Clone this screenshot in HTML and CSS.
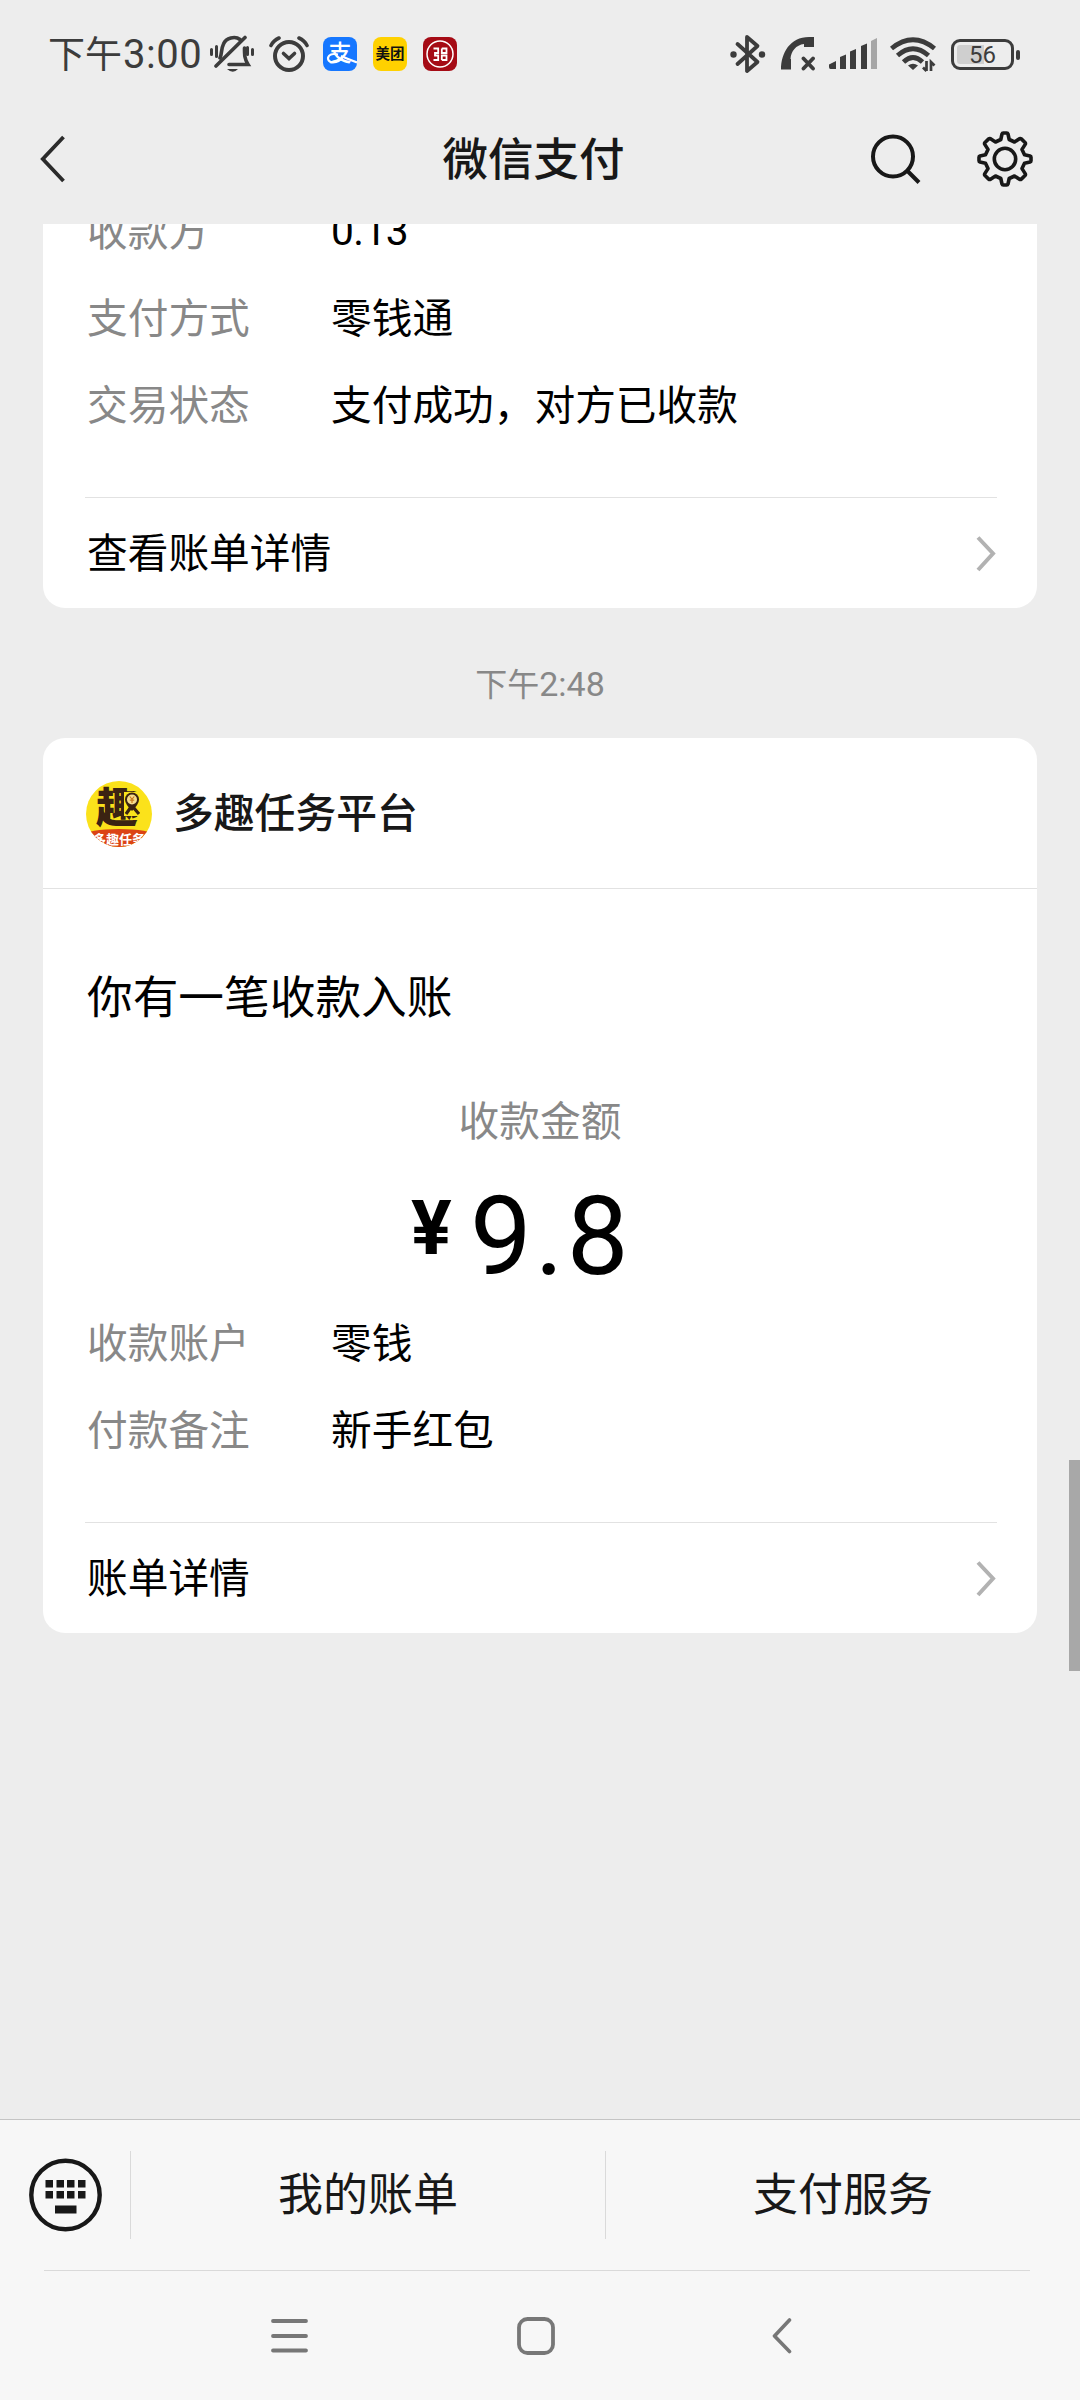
FILE: index.html
```html
<!DOCTYPE html>
<html lang="zh-CN">
<head>
<meta charset="utf-8">
<title>微信支付</title>
<link rel="stylesheet" href="styles.css">
</head>
<body>
<div class="screen">
  <div class="status">
    <div class="clock">下午<span class="digits">3:00</span></div>
    <svg class="bell" width="44" height="38" viewBox="0 0 44 38" fill="none" stroke="#3c3c3c" stroke-width="3.6" stroke-linecap="round">
      <path d="M10 23C12 19 11 14 13.500 9C16 3 25 0.500 30 4.500"/>
      <path d="M34.500 13C34.500 20 34.500 24 38 29.500H19"/>
      <path d="M6 31L35 2.500"/>
      <path d="M1.500 14.500v5M6.500 11.500v10M37.500 12.500v7M42.500 14.500v5" stroke-width="3"/>
      <path d="M17 34h11q-5 5.500-11 0z" fill="#3c3c3c" stroke="none"/>
    </svg>
    <svg class="alarm" width="40" height="36" viewBox="0 0 40 36" fill="none" stroke="#3c3c3c" stroke-linecap="round">
      <circle cx="20" cy="20" r="14" stroke-width="4"/>
      <path d="M14.500 17.500L20 22.500L25.500 17.500" stroke-width="3.600"/>
      <path d="M2 9.500Q4.500 4.500 10 2M38 9.500Q35.500 4.500 30 2" stroke-width="3.600"/>
    </svg>
    <div class="app alipay">支<svg width="34" height="34" viewBox="0 0 34 34" fill="none" stroke="#fff" stroke-width="2.200"><path d="M15 17.500C3 14.500 2.500 25.500 10 25.500C14 25.500 18 23 20.500 19M18 19Q26 22.500 34 25.500"/></svg></div>
    <div class="app meituan">美团</div>
    <div class="app icbc">
      <svg width="34" height="34" viewBox="0 0 34 34" fill="none" stroke="#fff">
        <circle cx="17" cy="17" r="13" stroke-width="1.500"/>
        <path d="M10.500 11.500H15.200V16H12V18.500H15.200V23H10.500M18.800 11.500H23.500V16H20.300M20.300 18.500H23.500V23H18.800M18.800 11.500V16H22M18.800 23V18.500H22" stroke-width="1.800"/>
      </svg>
    </div>
    <svg class="bt" width="36" height="40" viewBox="0 0 36 40" fill="none" stroke="#3c3c3c" stroke-width="3.800" stroke-linejoin="round" stroke-linecap="round">
      <path d="M7.500 10L27.500 28L17 37V3L27.500 12L7.500 30"/>
      <circle cx="3.500" cy="20.500" r="3.200" fill="#3c3c3c" stroke="none"/><circle cx="32" cy="20.500" r="3.200" fill="#3c3c3c" stroke="none"/>
    </svg>
    <svg class="call" width="35" height="34" viewBox="0 0 35 34">
      <path d="M0 32.500C0 16 9 0 28 0H33V10H23V7C15 8 10 14 9.500 22H10V32.500Z" fill="#3c3c3c"/>
      <path d="M22.500 21.500L32 31.500M32 21.500L22.500 31.500" stroke="#3c3c3c" stroke-width="3.800" stroke-linecap="round"/>
    </svg>
    <svg class="signal" width="48" height="32" viewBox="0 0 48 32" fill="#3c3c3c">
      <path d="M0 26.500L7 23V31H1.500Q0 31 0 29Z"/><path d="M11 19L17 16.500V31H11Z"/><path d="M21 13.500L27 11V31H21Z"/><path d="M32 8L38 5.500V31H32Z"/><path d="M42 3L48 0V31H42Z" fill="#a6a6a6"/>
    </svg>
    <svg class="wifi" width="47" height="35" viewBox="0 0 47 35" fill="none" stroke="#3c3c3c">
      <path d="M1.500 11.500Q23 -6 44.500 11.500" stroke-width="4.800"/>
      <path d="M7.500 18.500Q23 5 38.500 18.500" stroke-width="4.800"/>
      <path d="M13.500 25Q23 16 32.500 25" stroke-width="4.800"/>
      <path d="M18 28.500Q23 25 28 28.500L23 33Z" fill="#3c3c3c" stroke="none"/>
      <path d="M36.500 24V34M33 30.500L36.500 34M41 34V25L44.500 28.500" stroke-width="2.700"/>
    </svg>
    <div class="battery"><span class="level">56</span><i></i></div>
  </div>

  <header class="header">
    <svg class="back" width="26" height="48" viewBox="0 0 26 48" fill="none" stroke="#2b2b2b" stroke-width="3.800"><path d="M23.500 2L2.800 24L23.500 46"/></svg>
    <h1>微信支付</h1>
    <div class="actions">
      <svg width="50" height="50" viewBox="0 0 50 50" fill="none" stroke="#181818" stroke-width="4"><circle cx="22" cy="22.500" r="20"/><path d="M36.500 37L48 48.500"/></svg>
      <svg width="56" height="56" viewBox="0 0 56 56" fill="none" stroke="#181818" stroke-width="3.600" stroke-linejoin="round">
        <circle cx="28" cy="28" r="10.700"/>
        <path d="M23.800 8.500L25 3Q25.300 2 26.300 2H29.700Q30.700 2 31 3L32.200 8.500L37.500 11L42.500 7.700Q43.500 7.200 44.300 7.900L48 11.500Q48.800 12.400 48.200 13.400L45 18.400L47.500 23.800L53 25Q54 25.300 54 26.300V29.700Q54 30.700 53 31L47.500 32.200L45 37.600L48.200 42.600Q48.800 43.600 48 44.500L44.300 48.100Q43.500 48.800 42.500 48.300L37.500 45L32.200 47.500L31 53Q30.700 54 29.700 54H26.300Q25.300 54 25 53L23.800 47.500L18.500 45L13.500 48.300Q12.500 48.800 11.700 48.100L8 44.500Q7.200 43.600 7.800 42.600L11 37.600L8.500 32.200L3 31Q2 30.700 2 29.700V26.300Q2 25.300 3 25L8.500 23.800L11 18.400L7.800 13.400Q7.200 12.400 8 11.500L11.700 7.900Q12.500 7.200 13.500 7.700L18.500 11Z"/>
      </svg>
    </div>
  </header>

  <main class="chat">
    <section class="card card-cut">
      <dl class="rows">
        <dt>收款方</dt><dd class="num">0.13</dd>
        <dt>支付方式</dt><dd>零钱通</dd>
        <dt>交易状态</dt><dd>支付成功，对方已收款</dd>
      </dl>
      <a class="more"><span>查看账单详情</span><svg width="20" height="38" viewBox="0 0 20 38" fill="none" stroke="#b2b2b2" stroke-width="4"><path d="M2 2.500L17 18.500L2 35"/></svg></a>
    </section>
    <div class="time">下午<span class="digits">2:48</span></div>
    <section class="card">
      <div class="sender">
        <div class="avatar">
          <span class="qu">趣</span>
          <svg width="20" height="26" viewBox="0 0 20 26"><path d="M2 0H20V24H2Z" fill="#fbe21b"/><path d="M10 19Q3 12 3 7.500A7 7 0 0 1 17 7.500Q17 12 10 19Z" fill="#3b2312"/><circle cx="10" cy="7.500" r="5" fill="#f6dc8c"/><path d="M7.800 4.500L10 7.300L12.200 4.500M10 7.300V11M7.800 8.200H12.200" stroke="#c8781e" stroke-width="1.200" fill="none"/><path d="M9 15L4 22M11 15L17 22" stroke="#3b2312" stroke-width="3.200"/></svg>
          <span class="ribbon">多趣任务</span>
        </div>
        <span class="name">多趣任务平台</span>
      </div>
      <p class="headline">你有一笔收款入账</p>
      <p class="caption">收款金额</p>
      <p class="amount"><b>¥</b><span>9.8</span></p>
      <dl class="rows">
        <dt>收款账户</dt><dd>零钱</dd>
        <dt>付款备注</dt><dd>新手红包</dd>
      </dl>
      <a class="more"><span>账单详情</span><svg width="20" height="38" viewBox="0 0 20 38" fill="none" stroke="#b2b2b2" stroke-width="4"><path d="M2 2.500L17 18.500L2 35"/></svg></a>
    </section>
    <div class="thumb"></div>
  </main>

  <footer class="footer">
    <div class="menu">
      <div class="kbd">
        <svg width="74" height="74" viewBox="0 0 74 74" fill="#181818">
          <circle cx="36.500" cy="37" r="34.200" fill="none" stroke="#181818" stroke-width="4.400"/>
          <path d="M16.500 22h7.500v7.500h-7.500zM27.500 22h7.500v7.500h-7.500zM38 22h7.500v7.500h-7.500zM49 22h7.500v7.500h-7.500zM16.500 33h7.500v7.500h-7.500zM27.500 33h7.500v7.500h-7.500zM38 33h7.500v7.500h-7.500zM49 33h7.500v7.500h-7.500zM26 47.500h21.500v8H26z"/>
        </svg>
      </div>
      <div class="tab">我的账单</div>
      <div class="tab">支付服务</div>
    </div>
    <nav class="nav">
      <svg width="37" height="38" viewBox="0 0 37 38" fill="none" stroke="#777" stroke-width="3.800" stroke-linecap="round"><path d="M2 4H35M2 19H35M2 33.500H35"/></svg>
      <svg width="38" height="38" viewBox="0 0 38 38" fill="none" stroke="#777" stroke-width="3.800"><rect x="2" y="2" width="34" height="34" rx="8.500"/></svg>
      <svg width="20" height="38" viewBox="0 0 20 38" fill="none" stroke="#777" stroke-width="3.600" stroke-linecap="round" stroke-linejoin="round"><path d="M17.500 3L2.500 19L17.500 34.500"/></svg>
    </nav>
  </footer>
</div>
</body>
</html>
```
FILE: styles.css
```css
* { box-sizing: border-box; }
body {
  margin: 0;
  font-family: "Noto Sans CJK SC", sans-serif;
  color: #000;
  background: #ededed;
}
h1, p, dl, dd { margin: 0; font-weight: 400; }
svg { display: block; flex: none; }
.digits, .num { font-family: Roboto, "Noto Sans CJK SC", sans-serif; }
.screen {
  width: 1080px;
  height: 2400px;
  display: flex;
  flex-direction: column;
  overflow: hidden;
}

/* status bar */
.status {
  height: 108px;
  padding: 0 60px 0 48px;
  display: flex;
  align-items: center;
  color: #3c3c3c;
  flex: none;
}
.clock { width: 162px; font-size: 37px; line-height: 50px; padding-bottom: 1px; white-space: nowrap; }
.clock .digits { font-size: 40px; margin-left: 1px; letter-spacing: 0.5px; }
.alarm { margin-left: 15px; }
.app {
  width: 34px;
  height: 34px;
  border-radius: 8px;
  position: relative;
  margin-left: 16px;
  white-space: nowrap;
  text-align: center;
  flex: none;
}
.app svg { position: absolute; left: 0; top: 0; }
.alipay { background: #1677ff; color: #fff; margin-left: 14px; font-size: 23px; line-height: 28px; font-weight: 500; }
.meituan { background: #ffd100; color: #111; font-size: 14.5px; line-height: 32px; font-weight: 700; }
.icbc { background: #a50b15; }
.bt { margin-left: auto; }
.call { margin-left: 15px; }
.signal { margin-left: 13px; }
.wifi { margin-left: 13px; }
.battery {
  width: 63px;
  height: 31px;
  margin: 0 6px 0 14px;
  border: 3px solid #3c3c3c;
  border-radius: 9px;
  padding: 3px;
  position: relative;
  flex: none;
}
.battery .level {
  display: block;
  height: 19px;
  border-radius: 3px;
  background: linear-gradient(90deg, #cfcfcf 52%, transparent 52%);
  font: 24px/20px Roboto, sans-serif;
  text-align: center;
}
.battery i {
  position: absolute;
  right: -9px;
  top: 8px;
  width: 4px;
  height: 10px;
  border-radius: 2px;
  background: #3c3c3c;
}

/* title bar */
.header {
  height: 116px;
  padding: 0 47px 14px 40px;
  display: grid;
  grid-template-columns: 1fr 300px 1fr;
  align-items: center;
  flex: none;
  color: #181818;
}
.header h1 {
  font-size: 45.5px;
  line-height: 60px;
  font-weight: 500;
  text-align: center;
  white-space: nowrap;
  padding: 0 6px 6px 0;
}
.actions { display: flex; align-items: center; justify-content: flex-end; gap: 56px; }

/* conversation */
.chat { flex: 1; position: relative; padding: 0 43px; overflow: hidden; }
.card {
  background: #fff;
  border-radius: 22px;
  padding: 0 40px 0 42px;
}
.card-cut { margin-top: -38px; }
.rows {
  display: grid;
  grid-template-columns: 244px 1fr;
  grid-auto-rows: 87px;
  align-items: center;
  font-size: 40.7px;
  line-height: 58px;
  padding: 0 0 0 2px;
}
.rows dt, .rows dd { padding-bottom: 1px; }
.rows .num { padding: 3px 0 0; letter-spacing: -0.6px; }
.rows dt { color: #888; }
.more {
  height: 111px;
  margin-top: 50px;
  border-top: 1px solid #e2e2e2;
  display: flex;
  align-items: center;
  justify-content: space-between;
  font-size: 40.7px;
  line-height: 60px;
  padding: 1px 1px 0 2px;
}
.more span { padding-bottom: 5px; }
.time {
  height: 130px;
  text-align: center;
  line-height: 148px;
  font-size: 32px;
  color: #888;
}
.time .digits { font-size: 34px; }
.sender {
  height: 151px;
  margin: 0 -40px 0 -42px;
  padding: 1px 43px 0;
  border-bottom: 1px solid #e2e2e2;
  display: flex;
  align-items: center;
  gap: 21px;
  font-size: 40.8px;
  line-height: 60px;
  font-weight: 500;
  color: #181818;
}
.name { padding-bottom: 6px; }
.avatar {
  width: 66px;
  height: 66px;
  border-radius: 50%;
  background: #fbe21b;
  position: relative;
  overflow: hidden;
  flex: none;
}
.avatar .qu { position: absolute; left: 10px; top: 3px; font-size: 42px; line-height: 42px; font-weight: 900; color: #3b2312; }
.avatar svg { position: absolute; left: 36px; top: 11px; }
.avatar .ribbon {
  position: absolute;
  left: -2px;
  right: -2px;
  bottom: -1px;
  height: 19px;
  border-radius: 50% 50% 0 0 / 6px 6px 0 0;
  background: #db4315;
  color: #fff;
  font-size: 13px;
  line-height: 19px;
  font-weight: 700;
  text-align: center;
  white-space: nowrap;
}
.headline { font-size: 45.7px; line-height: 66px; padding: 72px 0 0 2px; }
.caption { font-size: 40.7px; line-height: 60px; padding-top: 62px; text-align: center; color: #888; margin-left: -2px; }
.amount {
  display: flex;
  align-items: flex-start;
  height: 149px;
  padding-left: 326px;
  font-family: Roboto, sans-serif;
}
.amount b { font-size: 76px; line-height: 90px; padding-top: 34px; width: 59px; }
.amount span { font-size: 110px; line-height: 128px; padding-top: 24px; letter-spacing: 3px; }
.thumb { position: absolute; right: 0; top: 1236px; width: 11px; height: 211px; background: #a8a8a8; }

/* bottom bars */
.footer { height: 281px; background: #f7f7f7; border-top: 1px solid #c4c4c4; flex: none; }
.menu {
  height: 150px;
  display: grid;
  grid-template-columns: 130px 475px 475px;
  align-items: center;
}
.kbd { padding-left: 29px; }
.tab {
  height: 88px;
  line-height: 82px;
  border-left: 1px solid #dadada;
  text-align: center;
  font-size: 45px;
  color: #181818;
}
.nav {
  height: 129px;
  margin: 0 50px 0 44px;
  border-top: 1px solid #dadada;
  display: flex;
  align-items: center;
  padding: 1px 0 0 227px;
  gap: 209px;
}
.nav svg:last-child { margin-left: 8px; }
```
